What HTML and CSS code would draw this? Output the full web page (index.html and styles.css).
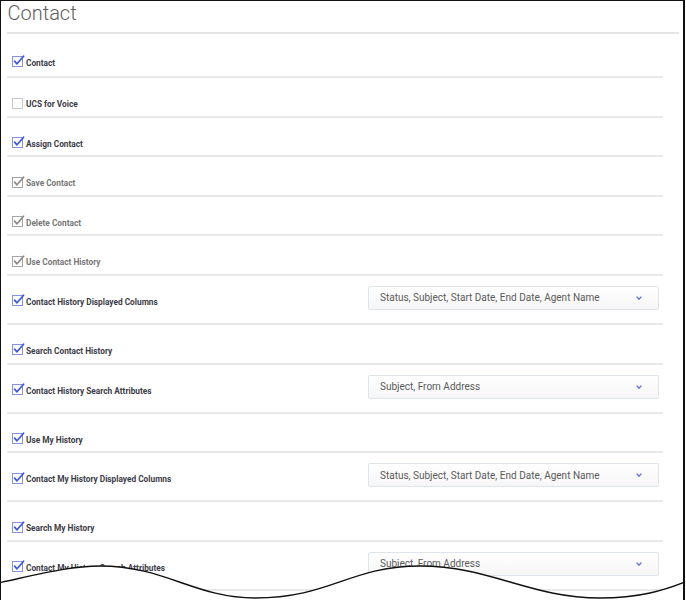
FILE: index.html
```html
<!DOCTYPE html>
<html>
<head>
<meta charset="utf-8">
<link rel="stylesheet" href="styles.css">
</head>
<body>
<div class="frame">
  <div class="header"><h1 class="title">Contact</h1></div>

  <div class="row first">
    <label class="item on"><span class="cb"><svg viewBox="0 0 13 13"><rect x="0.5" y="1.5" width="10" height="10"/><path d="M2.6 6.2 L5 8.8 L11.6 1.2"/></svg></span>Contact</label>
  </div>
  <div class="row">
    <label class="item off"><span class="cb"><svg viewBox="0 0 13 13"><rect x="0.5" y="1.5" width="10" height="10"/></svg></span>UCS for Voice</label>
  </div>
  <div class="row">
    <label class="item on"><span class="cb"><svg viewBox="0 0 13 13"><rect x="0.5" y="1.5" width="10" height="10"/><path d="M2.6 6.2 L5 8.8 L11.6 1.2"/></svg></span>Assign Contact</label>
  </div>
  <div class="row">
    <label class="item dis"><span class="cb"><svg viewBox="0 0 13 13"><rect x="0.5" y="1.5" width="10" height="10"/><path d="M2.6 6.2 L5 8.8 L11.6 1.2"/></svg></span>Save Contact</label>
  </div>
  <div class="row">
    <label class="item dis"><span class="cb"><svg viewBox="0 0 13 13"><rect x="0.5" y="1.5" width="10" height="10"/><path d="M2.6 6.2 L5 8.8 L11.6 1.2"/></svg></span>Delete Contact</label>
  </div>
  <div class="row">
    <label class="item dis"><span class="cb"><svg viewBox="0 0 13 13"><rect x="0.5" y="1.5" width="10" height="10"/><path d="M2.6 6.2 L5 8.8 L11.6 1.2"/></svg></span>Use Contact History</label>
  </div>
  <div class="row wide">
    <label class="item on"><span class="cb"><svg viewBox="0 0 13 13"><rect x="0.5" y="1.5" width="10" height="10"/><path d="M2.6 6.2 L5 8.8 L11.6 1.2"/></svg></span>Contact History Displayed Columns</label>
    <div class="select"><span>Status, Subject, Start Date, End Date, Agent Name</span><svg class="chev" viewBox="0 0 6 4"><path d="M0.6 0.6 L3 3.2 L5.4 0.6"/></svg></div>
  </div>
  <div class="row">
    <label class="item on"><span class="cb"><svg viewBox="0 0 13 13"><rect x="0.5" y="1.5" width="10" height="10"/><path d="M2.6 6.2 L5 8.8 L11.6 1.2"/></svg></span>Search Contact History</label>
  </div>
  <div class="row wide">
    <label class="item on"><span class="cb"><svg viewBox="0 0 13 13"><rect x="0.5" y="1.5" width="10" height="10"/><path d="M2.6 6.2 L5 8.8 L11.6 1.2"/></svg></span>Contact History Search Attributes</label>
    <div class="select"><span>Subject, From Address</span><svg class="chev" viewBox="0 0 6 4"><path d="M0.6 0.6 L3 3.2 L5.4 0.6"/></svg></div>
  </div>
  <div class="row">
    <label class="item on"><span class="cb"><svg viewBox="0 0 13 13"><rect x="0.5" y="1.5" width="10" height="10"/><path d="M2.6 6.2 L5 8.8 L11.6 1.2"/></svg></span>Use My History</label>
  </div>
  <div class="row wide">
    <label class="item on"><span class="cb"><svg viewBox="0 0 13 13"><rect x="0.5" y="1.5" width="10" height="10"/><path d="M2.6 6.2 L5 8.8 L11.6 1.2"/></svg></span>Contact My History Displayed Columns</label>
    <div class="select"><span>Status, Subject, Start Date, End Date, Agent Name</span><svg class="chev" viewBox="0 0 6 4"><path d="M0.6 0.6 L3 3.2 L5.4 0.6"/></svg></div>
  </div>
  <div class="row">
    <label class="item on"><span class="cb"><svg viewBox="0 0 13 13"><rect x="0.5" y="1.5" width="10" height="10"/><path d="M2.6 6.2 L5 8.8 L11.6 1.2"/></svg></span>Search My History</label>
  </div>
  <div class="row wide">
    <label class="item on"><span class="cb"><svg viewBox="0 0 13 13"><rect x="0.5" y="1.5" width="10" height="10"/><path d="M2.6 6.2 L5 8.8 L11.6 1.2"/></svg></span>Contact My History Search Attributes</label>
    <div class="select"><span>Subject, From Address</span><svg class="chev" viewBox="0 0 6 4"><path d="M0.6 0.6 L3 3.2 L5.4 0.6"/></svg></div>
  </div>

  <svg class="torn" viewBox="0 0 686 600" preserveAspectRatio="none">
    <path class="torn-fill" d="M-2 583 C40 574 70 566 100 566 C165 566 195 598 255 598 C330 598 350 566 420 566 C490 566 530 598 600 598 C640 598 665 590 686 582 L690 582 L690 610 L-2 610 Z"/>
    <path class="torn-edge" d="M-2 583 C40 574 70 566 100 566 C165 566 195 598 255 598 C330 598 350 566 420 566 C490 566 530 598 600 598 C640 598 665 590 685 582"/>
  </svg>
</div>
</body>
</html>
```
FILE: styles.css
```css
html, body {
  margin: 0;
  padding: 0;
  background: #ffffff;
}

body {
  width: 686px;
  height: 600px;
  overflow: hidden;
  font-family: Roboto, "Liberation Sans", Arial, sans-serif;
}

.frame {
  position: relative;
  width: 685px;
  height: 600px;
  box-sizing: border-box;
  border-left: 1.5px solid #111;
  border-top: 1.5px solid #111;
  border-right: 2px solid #111;
  background: #fff;
  overflow: hidden;
}

.header {
  height: 32px;
  box-sizing: border-box;
  margin: 0.5px 4px 0 5.5px;
  border-bottom: 2px solid #e6e6e6;
}

.title {
  margin: 0;
  padding-left: 1px;
  font-family: Roboto, "Liberation Sans", sans-serif;
  font-weight: 300;
  font-size: 20px;
  line-height: 22px;
  color: #5e5e5e;
}

.row {
  display: flex;
  align-items: flex-start;
  height: 39.6px;
  box-sizing: border-box;
  margin: 0 20px 0 5.5px;
  border-bottom: 2px solid #e8e8e8;
}

.row.first {
  height: 44.5px;
}

.row.first .item {
  padding-top: 23px;
}

.row.wide {
  height: 49px;
}

.item {
  display: flex;
  align-items: center;
  gap: 1.5px;
  padding-top: 20px;
  padding-left: 5px;
  font-size: 8.3px;
  font-weight: 700;
  line-height: 12px;
  color: #3c3c46;
  white-space: nowrap;
}

.cb {
  display: block;
  width: 13px;
  height: 13px;
  margin-top: -2px;
}

.cb svg {
  display: block;
  width: 13px;
  height: 13px;
  overflow: visible;
}

.cb rect {
  fill: #fff;
  stroke-width: 1;
}

.cb path {
  fill: none;
  stroke-width: 1.7;
  stroke-linecap: round;
  stroke-linejoin: round;
}

.item.on .cb rect { stroke: #8392e4; }
.item.on .cb path { stroke: #3d57d6; }

.item.dis { color: #777; }
.item.dis .cb rect { stroke: #a6a6a6; }
.item.dis .cb path { stroke: #8a8a8a; }

.item.off .cb rect { stroke: #c8c8c8; }

.select {
  margin-left: auto;
  margin-right: 4px;
  margin-top: 10px;
  width: 291px;
  height: 24px;
  box-sizing: border-box;
  display: flex;
  align-items: center;
  justify-content: space-between;
  padding: 0 16px 0 11px;
  border: 1px solid #dfe3ea;
  border-radius: 2px;
  background: linear-gradient(#ffffff, #f6f6f6);
  font-size: 10px;
  color: #5a5a5a;
  white-space: nowrap;
}

.chev {
  width: 6px;
  height: 4px;
  display: block;
}

.chev path {
  fill: none;
  stroke: #5b6fd8;
  stroke-width: 1.3;
}

.torn {
  position: absolute;
  left: -1.5px;
  top: -1.5px;
  width: 686px;
  height: 600px;
  pointer-events: none;
}

.torn-fill {
  fill: #fff;
}

.torn-edge {
  fill: none;
  stroke: #111;
  stroke-width: 1.4;
}
```
